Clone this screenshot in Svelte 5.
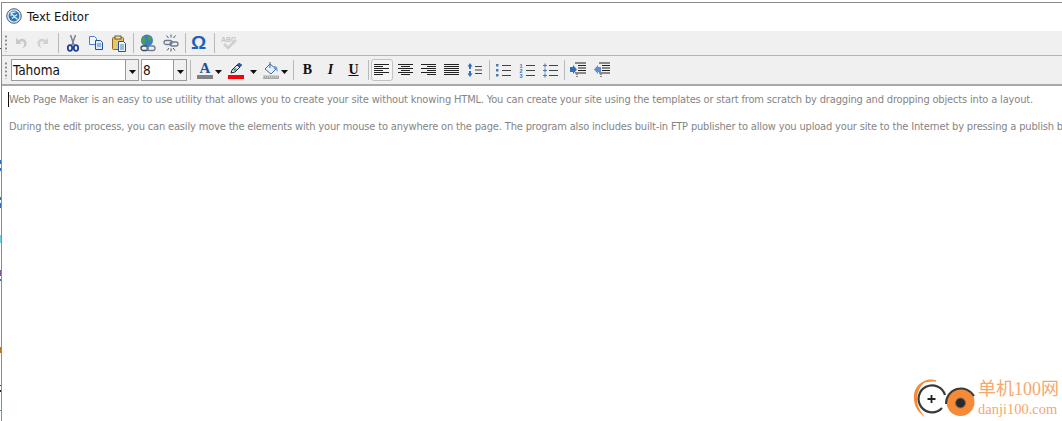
<script lang="ts">
  // vertical ticks of the window behind, visible in the 1px gutter on the left
  const TICKS = [
    { y: 48, h: 1, c: '#444' },
    { y: 160, h: 4, c: '#2b6fc4' },
    { y: 168, h: 3, c: '#2b6fc4' },
    { y: 197, h: 3, c: '#2b6fc4' },
    { y: 203, h: 5, c: '#2b6fc4' },
    { y: 235, h: 8, c: '#6fcfe6' },
    { y: 270, h: 6, c: '#7a5a9a' },
    { y: 279, h: 2, c: '#2b6fc4' },
    { y: 347, h: 6, c: '#b8741e' },
    { y: 385, h: 1, c: '#444' },
    { y: 390, h: 2, c: '#222' },
    { y: 410, h: 1, c: '#5a9a5a' },
  ]
  const ALIGN_ROWS = {
    left: [[0, 15], [0, 9], [0, 15], [0, 9], [0, 15], [0, 9]],
    center: [[0, 15], [3, 9], [0, 15], [3, 9], [0, 15], [3, 9]],
    right: [[0, 15], [6, 9], [0, 15], [6, 9], [0, 15], [6, 9]],
    justify: [[0, 15], [0, 15], [0, 15], [0, 15], [0, 15], [0, 15]],
  }
</script>

{#snippet align(kind: 'left' | 'center' | 'right' | 'justify')}
  <svg width="16" height="14" viewBox="0 0 16 14">
    {#each ALIGN_ROWS[kind] as r, i}
      <rect x={r[0]} y={1 + i * 2} width={r[1]} height="1" fill="#222" />
    {/each}
  </svg>
{/snippet}

{#snippet caret()}
  <svg class="caret" width="7" height="4" viewBox="0 0 7 4"><path d="M0 0h7L3.500 4z" fill="#111" /></svg>
{/snippet}

{#snippet listLines()}
  <rect x="7" y="2" width="9" height="1" fill="#444" />
  <rect x="7" y="7" width="9" height="1" fill="#444" />
  <rect x="7" y="12" width="9" height="1" fill="#444" />
{/snippet}

<div class="page">
  <div class="window">
    <header class="title">
      <svg width="16" height="16" viewBox="0 0 16 16">
        <circle cx="8" cy="8" r="7.300" fill="#dfe6ee" stroke="#46607c" />
        <circle cx="8" cy="8" r="5.400" fill="#2c79b8" />
        <path d="M4.500 4.500l7 7M5 8l1-3.500 3.500-.5M11 6.500l-5 4" stroke="#cfe6f7" stroke-width="1.400" fill="none" />
      </svg>
      <span>Text Editor</span>
    </header>

    <div class="bar bar-a">
      <i class="grip"></i>
      <button class="btn tight" aria-label="Undo">
        <svg width="16" height="16" viewBox="0 0 16 16"><path d="M3 3v6h6L7 7c2-1.500 4-.5 4 2 0 1.500-.5 3-2 4 3.500-.5 5-3 4.500-5.500C13 4 9 2.500 5.500 5z" fill="#c9c9c9" /></svg>
      </button>
      <button class="btn tight" aria-label="Redo">
        <svg width="16" height="16" viewBox="0 0 16 16"><path d="M13 3v6H7l2-2C7 5.500 5 6.500 5 9c0 1.500.5 3 2 4-3.500-.5-5-3-4.500-5.500C3 4 7 2.500 10.500 5z" fill="#d2d2d2" /></svg>
      </button>
      <i class="sep first"></i>
      <button class="btn" aria-label="Cut">
        <svg width="16" height="17" viewBox="0 0 16 17">
          <path d="M5.500 0l3.500 10M10.500 0L7 10" stroke="#7b808c" stroke-width="1.500" fill="none" />
          <ellipse cx="5" cy="13" rx="2.200" ry="2.800" fill="none" stroke="#1f3f9a" stroke-width="1.800" />
          <ellipse cx="11" cy="13" rx="2.200" ry="2.800" fill="none" stroke="#1f3f9a" stroke-width="1.800" />
        </svg>
      </button>
      <button class="btn" aria-label="Copy">
        <svg width="16" height="16" viewBox="0 0 16 16">
          <path d="M1.500 1.500h5l2 2v6h-7z" fill="#eef5fd" stroke="#4f7fc0" />
          <path d="M7.500 5.500h5l2 2v7h-7z" fill="#dbe9fa" stroke="#23509c" />
          <path d="M9 9h4M9 11h4" stroke="#4f7fc0" />
        </svg>
      </button>
      <button class="btn" aria-label="Paste">
        <svg width="16" height="17" viewBox="0 0 16 17">
          <rect x="1.500" y="2.500" width="11" height="12" rx="1" fill="#e9c66a" stroke="#8e6a1e" />
          <rect x="4" y="1" width="6" height="3" fill="#f5e3a8" stroke="#6b5a2a" />
          <path d="M7.500 6.500h5l2 2v8h-7z" fill="#eef4fb" stroke="#23509c" />
          <path d="M9 10h4M9 12h4M9 14h4" stroke="#4f7fc0" />
        </svg>
      </button>
      <i class="sep"></i>
      <button class="btn" aria-label="Insert link">
        <svg width="18" height="18" viewBox="0 0 18 18">
          <circle cx="8" cy="6.500" r="6" fill="#3b7fc4" />
          <path d="M3 3c2-1 4 0 3.500 3S5 9 6 11C3 10 2 8 2.500 6zM9 1.500c2 .5 4 2 3.500 4.500S10 7 9 5z" fill="#4f9f52" />
          <rect x="2" y="12" width="7" height="4.500" rx="2.200" fill="none" stroke="#3a4c66" stroke-width="1.300" />
          <rect x="8" y="12" width="8" height="4.500" rx="2.200" fill="none" stroke="#6a7c96" stroke-width="1.300" />
        </svg>
      </button>
      <button class="btn" aria-label="Remove link">
        <svg width="18" height="18" viewBox="0 0 18 18">
          <rect x="2" y="6.500" width="8" height="4" rx="2" fill="none" stroke="#6b7a8e" stroke-width="1.300" />
          <rect x="8" y="8" width="8" height="4" rx="2" fill="none" stroke="#6b7a8e" stroke-width="1.300" />
          <path d="M9 0.500v3M4.500 1.500l2 2.500M13.500 1.500l-2 2.500M9 14.500v3M5 16.500l2-2.500M13 16.500l-2-2.500" stroke="#4a5666" />
        </svg>
      </button>
      <i class="sep"></i>
      <button class="btn omega" aria-label="Insert symbol">Ω</button>
      <i class="sep"></i>
      <button class="btn" aria-label="Spelling">
        <svg width="18" height="16" viewBox="0 0 18 16">
          <text x="1" y="7" class="abc">ABC</text>
          <path d="M4 9l4 4 8-8" stroke="#cfcfcf" stroke-width="2.600" fill="none" />
        </svg>
      </button>
    </div>

    <div class="bar bar-b">
      <i class="grip"></i>
      <div class="combo font"><span>Tahoma</span><b>{@render caret()}</b></div>
      <div class="combo size"><span>8</span><b>{@render caret()}</b></div>
      <i class="sep"></i>
      <button class="btn split" aria-label="Text colour">
        <svg width="16" height="17" viewBox="0 0 16 17">
          <text x="2.500" y="11" class="big-a">A</text>
          <rect x="0" y="13" width="16" height="4" fill="#808080" />
        </svg>
        {@render caret()}
      </button>
      <button class="btn split pen" aria-label="Highlight colour">
        <svg width="16" height="17" viewBox="0 0 16 17">
          <path d="M3 11l1-3 5-5 3 2-5 5z" fill="#e8f0e8" stroke="#14204a" />
          <path d="M9 3l2-2 3 2-2 2z" fill="#2a5fc0" stroke="#14204a" stroke-width=".5" />
          <path d="M5 8l2-2 2 1-2 2z" fill="#3f9a5a" />
          <rect x="0" y="13" width="16" height="4" fill="#fb0007" />
        </svg>
        {@render caret()}
      </button>
      <button class="btn split bucket" aria-label="Background colour">
        <svg width="16" height="17" viewBox="0 0 16 17">
          <path d="M2 7l5-5 6 5-5 5z" fill="#e8f0fb" stroke="#3d6cae" />
          <path d="M7 0v6" stroke="#3d6cae" fill="none" />
          <path d="M11 4c3 0 4 2 3.500 6-1-2-2-3-3.500-3z" fill="#6f9ad6" />
          <rect x="0" y="13.500" width="16" height="3.500" fill="#a9a9a9" />
          <path d="M0 15h16" stroke="#e6e6e6" stroke-dasharray="1 1" />
        </svg>
        {@render caret()}
      </button>
      <i class="sep"></i>
      <button class="btn fmt" aria-label="Bold"><strong>B</strong></button>
      <button class="btn fmt" aria-label="Italic"><em>I</em></button>
      <button class="btn fmt" aria-label="Underline"><u>U</u></button>
      <i class="sep"></i>
      <button class="btn on" aria-label="Align left">{@render align('left')}</button>
      <button class="btn" aria-label="Align centre">{@render align('center')}</button>
      <button class="btn" aria-label="Align right">{@render align('right')}</button>
      <button class="btn" aria-label="Justify">{@render align('justify')}</button>
      <button class="btn" aria-label="Line spacing">
        <svg width="16" height="16" viewBox="0 0 16 16">
          <path d="M3 1l2.500 3.500H4V7H2V4.500H.5zM3 15l2.500-3.500H4V9H2v2.500H.5z" fill="#2f6fc0" />
          <path d="M8 4.500h7M8 8h7M8 11.500h7" stroke="#444" />
        </svg>
      </button>
      <i class="sep"></i>
      <button class="btn shift" aria-label="Bullets">
        <svg width="16" height="15" viewBox="0 0 16 15">
          <rect x="1" y="1" width="2.500" height="2.500" fill="#4f78b0" />
          <rect x="1" y="6" width="2.500" height="2.500" fill="#4f78b0" />
          <rect x="1" y="11" width="2.500" height="2.500" fill="#4f78b0" />
          {@render listLines()}
        </svg>
      </button>
      <button class="btn" aria-label="Numbering">
        <svg width="16" height="15" viewBox="0 0 16 15">
          <text x="0.500" y="5" class="num">1</text>
          <text x="0.500" y="10" class="num">2</text>
          <text x="0.500" y="15" class="num">3</text>
          {@render listLines()}
        </svg>
      </button>
      <button class="btn" aria-label="Checklist">
        <svg width="16" height="15" viewBox="0 0 16 15">
          <path d="M1 2.500h4M3 .500v4M1 7.500h4M3 5.500v4M1 12.500h4M3 10.500v4" stroke="#4f78b0" stroke-width="1.100" />
          {@render listLines()}
        </svg>
      </button>
      <i class="sep"></i>
      <button class="btn shift" aria-label="Indent">
        <svg width="16" height="16" viewBox="0 0 16 16">
          <path d="M0 5h3V3l4 4.500L3 12v-2H0z" fill="#2f6fc0" />
          <path d="M5 1h11M8 3.500h8M8 6h8M8 8.500h8M5 11h11" stroke="#222" />
          <path d="M7 12v4" stroke="#222" stroke-dasharray="1 1" />
        </svg>
      </button>
      <button class="btn" aria-label="Outdent">
        <svg width="16" height="16" viewBox="0 0 16 16">
          <path d="M7 5H4V3L0 7.500 4 12v-2h3z" fill="#5f8fcf" />
          <path d="M5 1h11M8 3.500h8M8 6h8M8 8.500h8M5 11h11" stroke="#222" />
          <path d="M7 12v4" stroke="#222" stroke-dasharray="1 1" />
        </svg>
      </button>
    </div>

    <main class="doc">
      <i class="cursor"></i>
      <p>Web Page Maker is an easy to use utility that allows you to create your site without knowing HTML. You can create your site using the templates or start from scratch by dragging and dropping objects into a layout.</p>
      <p>During the edit process, you can easily move the elements with your mouse to anywhere on the page. The program also includes built-in FTP publisher to allow you upload your site to the Internet by pressing a publish button.</p>
    </main>
  </div>

  {#each TICKS as t}
    <i class="tick" style="top:{t.y}px; height:{t.h}px; background:{t.c};"></i>
  {/each}

  <div class="mark">
    <svg width="64" height="44" viewBox="0 0 64 44">
      <path d="M14 4C5 6 1 14 2 23c1 8 5 13 11 17C8 34 5 29 5 22 5 15 8 9 14 4z" fill="#f58a38" />
      <path d="M10 6c4-3 9-4 14-2-5 0-9 0-14 2z" fill="#f58a38" stroke="#f58a38" />
      <path d="M30 31A13.500 13.500 0 1 1 33 18" fill="#fff" stroke="#3a3a3a" stroke-width="2.200" />
      <path d="M15.500 22h8M19.500 18v8" stroke="#222" stroke-width="1.800" />
      <circle cx="48.500" cy="25" r="14" fill="#f58a38" />
      <path d="M34 27a15 15 0 0 1 28-8" fill="none" stroke="#3a3a3a" stroke-width="2" />
      <circle cx="48.500" cy="26" r="5" fill="#2a2a2a" stroke="#8a6a50" />
    </svg>
    <div class="mark-text">
      <span class="cn">单机100网</span>
      <span class="en">danji100.com</span>
    </div>
  </div>
</div>

<style>
  :global(body) {
    margin: 0;
    background: #fff;
    overflow: hidden;
  }
  .page {
    position: relative;
    width: 1062px;
    height: 421px;
    box-sizing: border-box;
    padding: 2px 0 0 1px;
    overflow: hidden;
    font-family: "DejaVu Sans Condensed", "DejaVu Sans", sans-serif;
    font-stretch: condensed;
  }
  .window {
    height: 100%;
    box-sizing: border-box;
    border-top: 1px solid #8c8c8c;
    border-left: 1px solid #8c8c8c;
    display: flex;
    flex-direction: column;
    overflow: hidden;
  }
  .title {
    flex: none;
    height: 28px;
    box-sizing: border-box;
    padding: 0 0 2px 4px;
    display: flex;
    align-items: center;
    gap: 5px;
    background: #fff;
    font-size: 13px;
    color: #111;
  }
  .bar {
    flex: none;
    display: flex;
    align-items: center;
    width: 1200px;
    background: #f0f0f0;
    padding-left: 2px;
    box-sizing: border-box;
  }
  .bar-a {
    height: 25px;
    border-bottom: 1px solid #b4b4b4;
  }
  .bar-b {
    height: 30px;
    border-bottom: 2px solid #a9a9a9;
  }
  .grip {
    flex: none;
    width: 6px;
    height: 17px;
    background: radial-gradient(circle at 2px 1.500px, #8a8a8a 1px, transparent 1.200px) 0 0 / 4px 4px repeat-y;
  }
  .sep {
    flex: none;
    width: 6px;
    height: 20px;
    background: linear-gradient(#b9b9b9, #b9b9b9) center / 1px 100% no-repeat;
  }
  .sep.first {
    margin-left: 1px;
  }
  .btn {
    flex: none;
    width: 23px;
    height: 22px;
    padding: 0;
    border: 0;
    background: none;
    display: flex;
    align-items: center;
    justify-content: center;
    color: #111;
    font-family: "Liberation Serif", serif;
  }
  .btn.tight {
    width: 22px;
  }
  .btn.shift {
    margin: 0 1px 0 -1px;
  }
  .btn.on {
    width: 22px;
    margin: 0 1px 0 0;
    border: 1px solid #c2c2c2;
    border-radius: 3px;
    box-sizing: border-box;
    background: #f5f5f5;
  }
  .btn.split {
    width: 31px;
    gap: 2px;
    justify-content: flex-start;
    padding-left: 4px;
    box-sizing: border-box;
  }
  .btn.pen {
    width: 35px;
    gap: 6px;
  }
  .btn.bucket {
    padding-left: 3px;
    margin-left: 1px;
    margin-right: -1px;
  }
  .caret {
    flex: none;
    margin-top: 3px;
  }
  .omega {
    margin: 0 1px 0 -1px;
    font-size: 19px;
    font-weight: bold;
    color: #1f5fc0;
    font-family: "Liberation Sans", sans-serif;
  }
  .fmt {
    font-size: 14px;
  }
  .fmt strong {
    font-weight: 900;
  }
  .fmt em {
    font-weight: bold;
  }
  .fmt u {
    font-weight: bold;
  }
  .abc {
    font: bold 7px "Liberation Sans", sans-serif;
    fill: #c4c4c4;
  }
  .big-a {
    font: bold 15px "Liberation Serif", serif;
    fill: #254f95;
  }
  .num {
    font: bold 5.500px "Liberation Sans", sans-serif;
    fill: #3a6fb8;
  }
  .combo {
    flex: none;
    height: 22px;
    box-sizing: border-box;
    display: flex;
    align-items: center;
    background: #fff;
    border: 1px solid #9a9a9a;
    font-size: 13.500px;
    color: #111;
  }
  .combo span {
    flex: 1;
    padding-left: 1px;
  }
  .combo b {
    flex: none;
    width: 12px;
    height: 100%;
    display: flex;
    align-items: center;
    justify-content: center;
    background: #f0f0f0;
    border-left: 1px solid #9a9a9a;
  }
  .combo.font {
    width: 128px;
    margin-left: 1px;
  }
  .combo.size {
    width: 46px;
    margin-left: 2px;
  }
  .doc {
    position: relative;
    flex: 1;
    background: #fff;
    padding: 7px 0 0 7px;
    white-space: nowrap;
    color: #858585;
    font-size: 11px;
    line-height: 14px;
    letter-spacing: -0.165px;
  }
  .doc p {
    margin: 0 0 13px;
  }
  .cursor {
    position: absolute;
    left: 6px;
    top: 6px;
    width: 1px;
    height: 15px;
    background: #111;
  }
  .tick {
    position: absolute;
    left: 0;
    width: 1px;
  }
  .mark {
    position: absolute;
    left: 912px;
    top: 377px;
    display: flex;
    align-items: flex-start;
    gap: 2px;
  }
  .mark-text {
    display: flex;
    flex-direction: column;
    color: #f7a76c;
    white-space: nowrap;
  }
  .cn {
    font-family: "Liberation Serif", "Noto Sans CJK SC", serif;
    font-size: 18px;
    line-height: 24px;
  }
  .en {
    font-family: "Liberation Serif", serif;
    font-size: 14.500px;
    line-height: 16px;
  }
</style>
